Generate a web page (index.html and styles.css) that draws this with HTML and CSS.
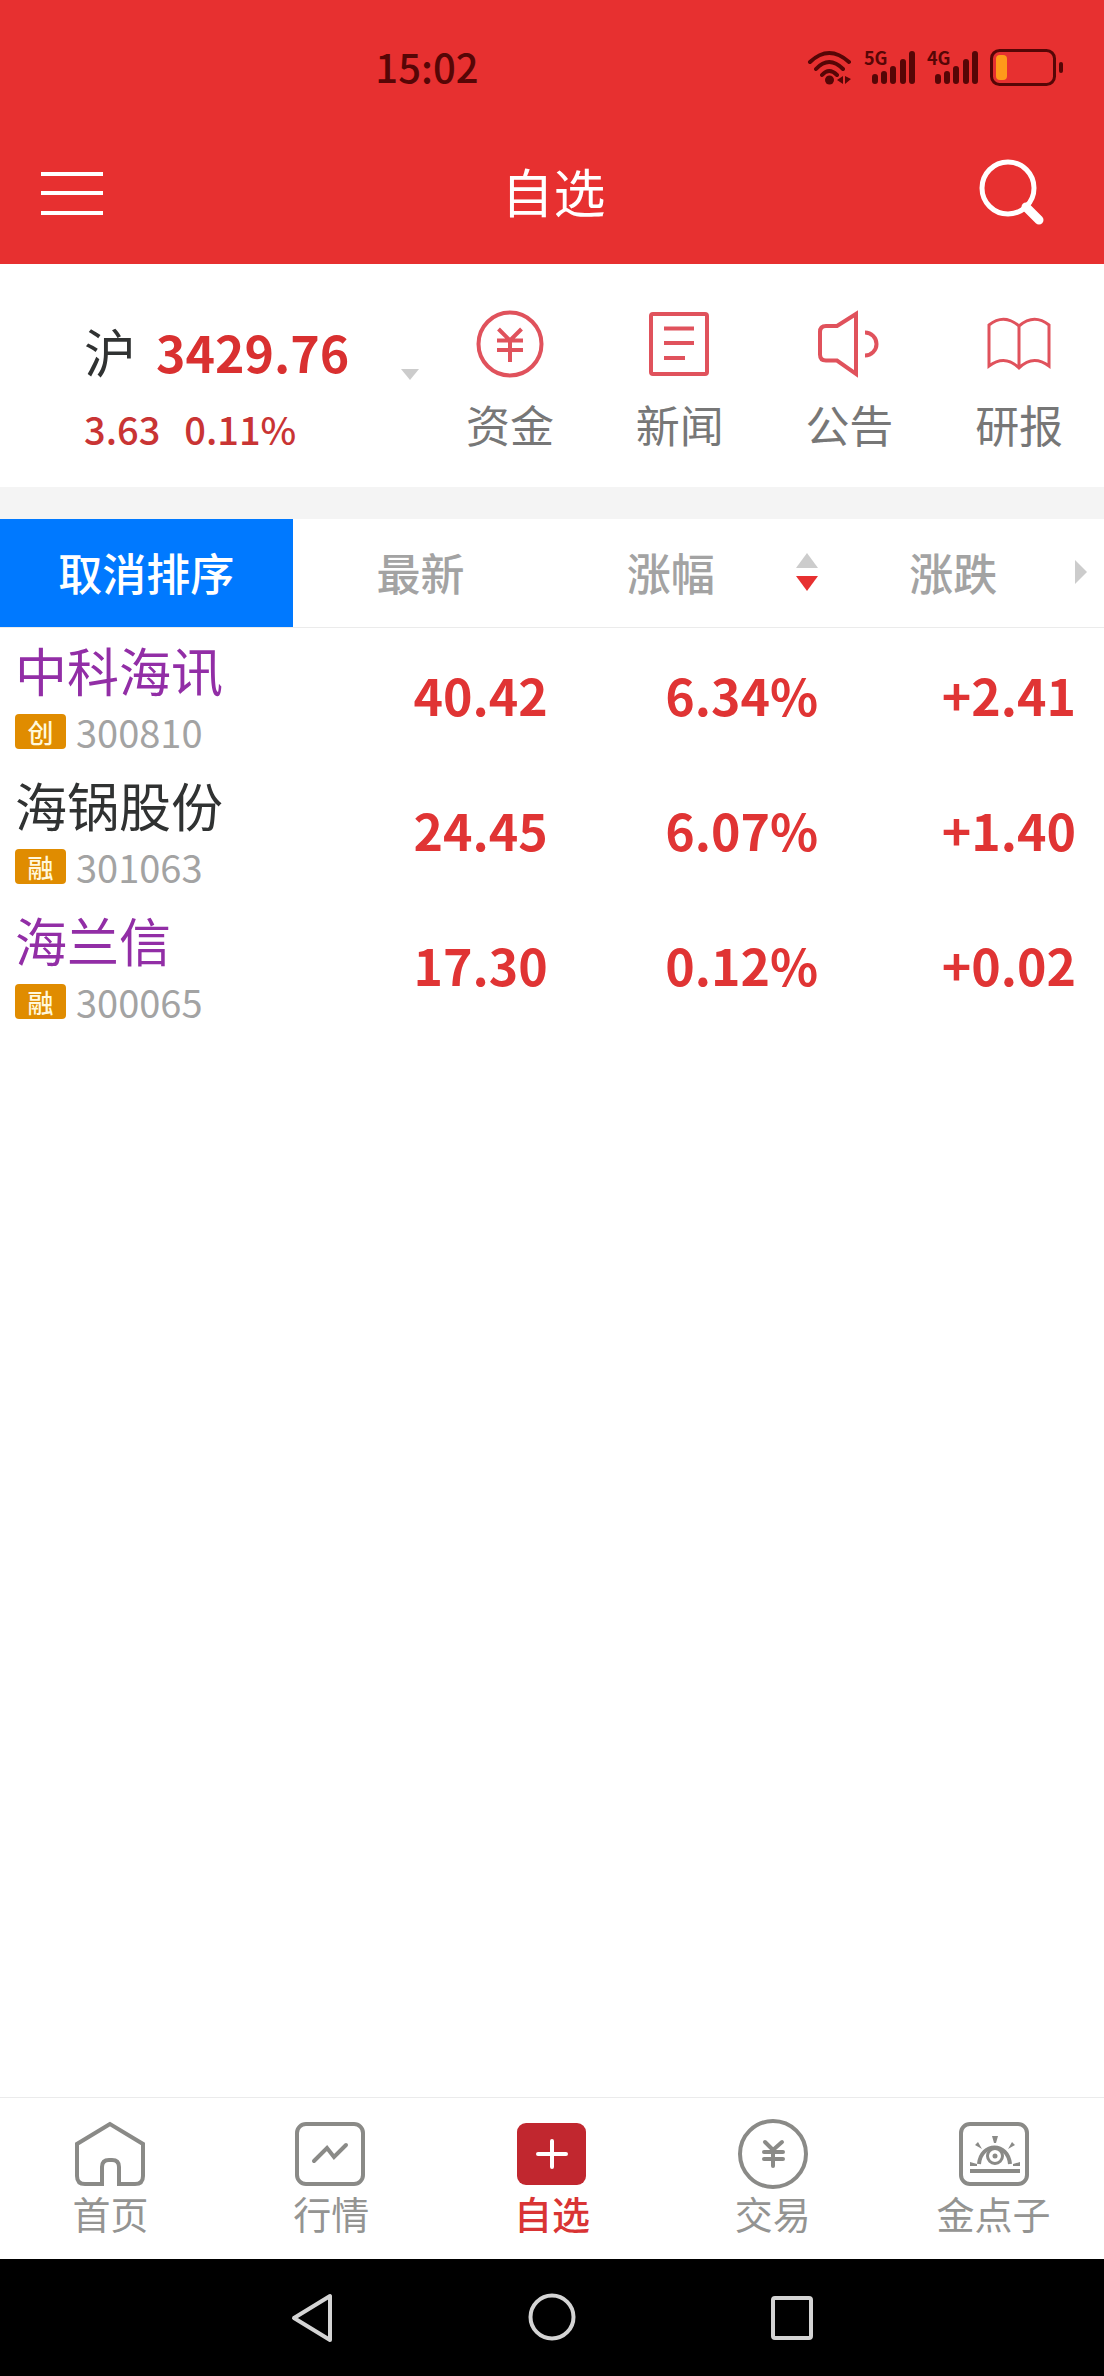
FILE: index.html
```html
<!DOCTYPE html>
<html lang="zh-CN">
<head>
<meta charset="utf-8">
<meta name="viewport" content="width=device-width, initial-scale=1">
<title>自选</title>
<link rel="stylesheet" href="styles.css">
</head>
<body>
<div class="status-bar">
  <time class="clock">15:02</time>
  <div class="status-icons">
    <svg class="wifi" width="46" height="36" viewBox="0 0 46 36" fill="none" stroke="currentColor" stroke-width="4" stroke-linecap="round">
      <path d="M3 12Q22-6 42 12M9 19Q22 5 36 19M15 25Q22 17 30 25"/>
      <circle cx="22.500" cy="30" r="4.500" fill="currentColor" stroke="none"/>
      <path d="M36 26v8l-6-4zM38 26l6 3-6 5z" fill="currentColor" stroke="none"/>
    </svg>
    <div class="signal">
      <span class="signal-label">5G</span>
      <svg width="44" height="36" viewBox="0 0 44 36" stroke="currentColor" stroke-width="6" stroke-linecap="round"><path d="M3 27v4M12 24v7M21 19v12M31 12v19M40 4v27"/></svg>
    </div>
    <div class="signal">
      <span class="signal-label">4G</span>
      <svg width="44" height="36" viewBox="0 0 44 36" stroke="currentColor" stroke-width="6" stroke-linecap="round"><path d="M3 27v4M12 24v7M21 19v12M31 12v19M40 4v27"/></svg>
    </div>
    <svg class="battery" width="74" height="38" viewBox="0 0 74 38">
      <rect x="1.500" y="1.500" width="63" height="34" rx="8" fill="none" stroke="currentColor" stroke-width="3"/>
      <rect x="6" y="6" width="11" height="25" rx="4" fill="#ff9a1a"/>
      <rect x="69" y="13" width="4" height="11" rx="2" fill="currentColor"/>
    </svg>
  </div>
</div>

<header class="app-bar">
  <button class="icon-button" type="button" aria-label="菜单">
    <svg width="62" height="44" viewBox="0 0 62 44" stroke="currentColor" stroke-width="4"><path d="M0 3h62M0 22h62M0 42h62"/></svg>
  </button>
  <h1 class="title">自选</h1>
  <button class="icon-button" type="button" aria-label="搜索">
    <svg width="68" height="70" viewBox="0 0 68 70" fill="none" stroke="currentColor">
      <circle cx="30" cy="30" r="26" stroke-width="5"/>
      <path d="M48 49L61 62" stroke-width="9" stroke-linecap="round"/>
    </svg>
  </button>
</header>

<section class="overview">
  <button class="index" type="button">
    <span class="index-main"><span class="index-name">沪</span><strong class="index-value">3429.76</strong></span>
    <svg class="index-caret" width="18" height="11" viewBox="0 0 18 11" fill="#ccc"><path d="M0 0h18l-9 11z"/></svg>
    <span class="index-change"><span>3.63</span><span>0.11%</span></span>
  </button>
  <nav class="shortcuts">
    <a class="shortcut" href="#funds">
      <svg width="68" height="68" viewBox="0 0 68 68" fill="none" stroke="currentColor" stroke-width="4"><circle cx="34" cy="34" r="31.500"/><path d="M22.500 19L34 30.500 45.500 19M34 30v22M21 30.500h26M21 40h26"/></svg>
      资金
    </a>
    <a class="shortcut" href="#news">
      <svg width="68" height="68" viewBox="0 0 68 68" fill="none" stroke="currentColor" stroke-width="4"><rect x="5" y="4" width="56" height="60" rx="2"/><path d="M18 18.500h30M18 33h30M18 48h21"/></svg>
      新闻
    </a>
    <a class="shortcut" href="#notices">
      <svg width="68" height="68" viewBox="0 0 68 68" fill="none" stroke="currentColor" stroke-width="4"><path d="M5 22q0-6 6-6h11L41 4v60L22 50.500H11q-6 0-6-6z"/><path d="M50 22.500a11.500 11.500 0 0 1 0 23"/></svg>
      公告
    </a>
    <a class="shortcut" href="#research">
      <svg width="68" height="68" viewBox="0 0 68 68" fill="none" stroke="currentColor" stroke-width="3"><path d="M34 16Q19 3 4 15v41Q20 44 34 58 48 44 64 56V15Q49 3 34 16zM34 16v42"/></svg>
      研报
    </a>
  </nav>
</section>

<main class="watchlist">
  <table class="quotes">
    <colgroup><col class="col-name"><col class="col-price"><col class="col-percent"><col class="col-change"></colgroup>
    <thead>
      <tr>
        <th class="head-reset" scope="col"><button class="head-button" type="button">取消排序</button></th>
        <th scope="col"><button class="head-button" type="button">最新</button></th>
        <th scope="col" aria-sort="descending"><button class="head-button head-percent" type="button">涨幅
          <svg width="24" height="38" viewBox="0 0 24 38"><path d="M1 15h22L12 0z" fill="#ccc"/><path d="M1 23h22L12 38z" fill="#e73030"/></svg></button></th>
        <th scope="col"><button class="head-button head-change" type="button">涨跌
          <svg width="12" height="24" viewBox="0 0 12 24"><path d="M0 0v24l12-12z" fill="#ccc"/></svg></button></th>
      </tr>
    </thead>
    <tbody>
      <tr>
        <td class="stock"><a class="stock-name visited" href="#300810">中科海讯</a><span class="stock-meta"><span class="badge">创</span>300810</span></td>
        <td>40.42</td><td>6.34%</td><td class="change">+2.41</td>
      </tr>
      <tr>
        <td class="stock"><a class="stock-name" href="#301063">海锅股份</a><span class="stock-meta"><span class="badge">融</span>301063</span></td>
        <td>24.45</td><td>6.07%</td><td class="change">+1.40</td>
      </tr>
      <tr>
        <td class="stock"><a class="stock-name visited" href="#300065">海兰信</a><span class="stock-meta"><span class="badge">融</span>300065</span></td>
        <td>17.30</td><td>0.12%</td><td class="change">+0.02</td>
      </tr>
    </tbody>
  </table>
</main>

<nav class="tab-bar">
  <a class="tab" href="#home">
    <svg width="72" height="72" viewBox="0 0 72 72" fill="none" stroke="#8a8a87" stroke-width="4"><path d="M36 6L3 26v32q0 8 8 8h17V49q0-7 7-7h3q7 0 7 7v17h16q8 0 8-8V26z"/></svg>
    首页
  </a>
  <a class="tab" href="#market">
    <svg width="72" height="72" viewBox="0 0 72 72" fill="none" stroke="#8a8a87" stroke-width="4"><rect x="2" y="6" width="66" height="60" rx="9"/><path d="M19 43L32 30l7 9 12-12" stroke-linecap="round"/></svg>
    行情
  </a>
  <a class="tab active" href="#watchlist" aria-current="page">
    <svg width="72" height="72" viewBox="0 0 72 72" fill="none"><rect x="1" y="5" width="69" height="62" rx="9" fill="#c1272f"/><path d="M36 23v26M22 36h28" stroke="#fff" stroke-width="4" stroke-linecap="round"/></svg>
    自选
  </a>
  <a class="tab" href="#trade">
    <svg width="72" height="72" viewBox="0 0 72 72" fill="none" stroke="#8a8a87" stroke-width="4"><circle cx="36" cy="36" r="33"/><path d="M28 24l8 8 9-8M36 32v16M27 34h19M27 41h19" stroke-linecap="round"/></svg>
    交易
  </a>
  <a class="tab" href="#ideas">
    <svg width="72" height="72" viewBox="0 0 72 72" fill="none" stroke="#8a8a87" stroke-width="4"><rect x="3" y="6" width="66" height="60" rx="9"/><path d="M12 53h50"/><path d="M21 46C23 24 50 24 52 46" stroke-width="4"/><circle cx="37" cy="38" r="7.500" stroke-width="3"/><circle cx="37" cy="38" r="2.500" fill="#8a8a87" stroke="none"/><path d="M34 18h6l-2 7h-2zM17 27l3-3 4 7zM57 27l-3-3-4 7zM12 44l7 2v2h-7zM62 44l-7 2v2h7z" fill="#8a8a87" stroke="none"/></svg>
    金点子
  </a>
</nav>

<div class="system-bar">
  <button class="system-button" type="button" aria-label="返回"><svg width="48" height="50" viewBox="0 0 48 50"><path d="M6 25L42 3v44z"/></svg></button>
  <button class="system-button" type="button" aria-label="主屏幕"><svg width="50" height="50" viewBox="0 0 50 50"><circle cx="25" cy="24" r="21.500"/></svg></button>
  <button class="system-button" type="button" aria-label="最近任务"><svg width="48" height="50" viewBox="0 0 48 50"><rect x="5" y="5" width="38" height="40" rx="2"/></svg></button>
</div>
</body>
</html>
```
FILE: styles.css
```css
* {
  box-sizing: border-box;
}

body {
  margin: 0;
  min-height: 100vh;
  display: flex;
  flex-direction: column;
  background: #fff;
  color: #303232;
  font-family: "Noto Sans CJK SC", sans-serif;
}

button {
  margin: 0;
  padding: 0;
  border: 0;
  background: none;
  color: inherit;
  font: inherit;
}

a {
  color: inherit;
  text-decoration: none;
}

svg {
  display: block;
  flex: none;
}

/* Status bar and title */
.status-bar {
  display: flex;
  justify-content: space-between;
  align-items: center;
  height: 132px;
  padding: 4px 40px 0 34%;
  background: #e73030;
  color: #560606;
}

.clock {
  padding-bottom: 4px;
  font-size: 40px;
  font-weight: 500;
  line-height: 48px;
}

.status-icons {
  display: flex;
  align-items: center;
  gap: 11px;
}

.signal {
  position: relative;
  padding-left: 8px;
}

.signal-label {
  position: absolute;
  left: 0;
  top: -2px;
  font-size: 18px;
  font-weight: 700;
  line-height: 18px;
}

.app-bar {
  display: grid;
  grid-template-columns: 68px 1fr 68px;
  align-items: center;
  height: 132px;
  padding: 0 58px 10px 41px;
  background: #e73030;
  color: #fff;
}

.icon-button {
  width: 68px;
}

.title {
  margin: 0;
  padding: 0 0 4px 20px;
  font-size: 52px;
  font-weight: 400;
  line-height: 60px;
  text-align: center;
}

/* Index summary and shortcuts */
.overview {
  display: grid;
  grid-template-columns: 77fr 123fr;
  height: 255px;
  border-bottom: 32px solid #f4f4f4;
}

.index {
  display: grid;
  grid-template-columns: 1fr auto;
  align-content: start;
  align-items: center;
  row-gap: 18px;
  padding: 55px 6px 0 84px;
  text-align: left;
}

.index-main {
  display: flex;
  align-items: center;
  gap: 20px;
  font-size: 52px;
  line-height: 64px;
}

.index-value {
  color: #d93030;
  font-size: 50px;
  font-weight: 700;
}

.index-caret {
  align-self: end;
  margin-bottom: 3px;
}

.index-change {
  display: flex;
  gap: 24px;
  color: #c93434;
  font-size: 38px;
  font-weight: 500;
  line-height: 56px;
}

.shortcuts {
  display: grid;
  grid-template-columns: repeat(4, 1fr);
}

.shortcut {
  display: flex;
  flex-direction: column;
  align-items: center;
  gap: 16px;
  padding-top: 46px;
  color: #777;
  font-size: 44px;
  line-height: 60px;
}

.shortcut svg {
  color: #e0525c;
}

/* Watchlist */
.watchlist {
  flex: 1;
}

.quotes {
  width: 100%;
  table-layout: fixed;
  border-collapse: separate;
  border-spacing: 0;
}

.col-name {
  width: 26.5%;
}

.col-price {
  width: 23.2%;
}

.col-percent {
  width: 24.5%;
}

.col-change {
  width: 25.8%;
}

.quotes th {
  height: 109px;
  padding: 0;
  border-bottom: 1px solid #ebebeb;
  color: #a3a3a3;
  font-size: 44px;
  font-weight: 500;
}

.quotes .head-reset {
  background: #0079ff;
  color: #fff;
}

.head-button {
  display: flex;
  justify-content: center;
  align-items: center;
  width: 100%;
  height: 108px;
  padding-bottom: 2px;
  line-height: 60px;
}

.head-percent {
  justify-content: space-between;
  padding-left: 78px;
}

.head-change {
  justify-content: space-between;
  padding-right: 17px;
  padding-left: 90px;
}

.quotes td {
  height: 135px;
  padding: 0 1px 4px 0;
  color: #e03434;
  font-size: 50px;
  font-weight: 700;
  line-height: 60px;
  text-align: right;
}

.quotes .change {
  padding-right: 28px;
}

.quotes .stock {
  padding: 6px 0 0 15px;
  color: #303232;
  font-weight: 400;
  text-align: left;
}

.stock-name {
  display: block;
  font-size: 52px;
  line-height: 64px;
}

.visited {
  color: #922ea6;
}

.stock-meta {
  display: flex;
  align-items: center;
  gap: 10px;
  margin-top: 2px;
  color: #a3a3a3;
  font-size: 38px;
  line-height: 56px;
}

.badge {
  width: 51px;
  border-radius: 4px;
  background: #e08c00;
  color: #fff8dc;
  font-size: 26px;
  font-weight: 500;
  line-height: 35px;
  text-align: center;
}

/* App tabs */
.tab-bar {
  display: grid;
  grid-template-columns: repeat(5, 1fr);
  height: 162px;
  border-top: 1px solid #ebebeb;
}

.tab {
  display: flex;
  flex-direction: column;
  align-items: center;
  padding-top: 20px;
  color: #949492;
  font-size: 38px;
  line-height: 46px;
}

.active {
  color: #d93434;
  font-weight: 500;
}

/* System navigation */
.system-bar {
  display: flex;
  justify-content: center;
  gap: 190px;
  height: 117px;
  background: #000;
}

.system-button {
  width: 50px;
}

.system-button svg {
  margin: 0 auto;
  fill: none;
  stroke: #d4d4d4;
  stroke-width: 4;
  stroke-linejoin: round;
}
```
